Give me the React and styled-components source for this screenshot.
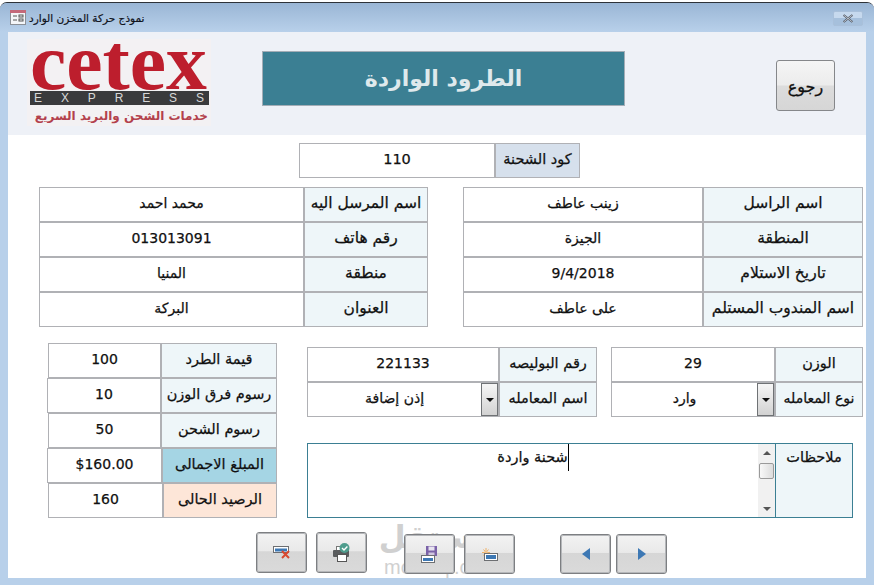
import React from 'react'
import styled, { createGlobalStyle } from 'styled-components'

const FONT = `"DejaVu Sans", "Noto Sans", sans-serif`

const GlobalStyle = createGlobalStyle`
  html, body {
    margin: 0;
    padding: 0;
    background: #fff;
    font-family: ${FONT};
  }
`

const labelTones = {
  pale: '#eef6f9',
  steel: '#d6e0ec',
  blue: '#a5d5e4',
  peach: '#fde6d8',
}

const senderRows = [
  ['اسم الراسل', 'زينب عاطف'],
  ['المنطقة', 'الجيزة'],
  ['تاريخ الاستلام', '9/4/2018'],
  ['اسم المندوب المستلم', 'على عاطف'],
]

const receiverRows = [
  ['اسم المرسل اليه', 'محمد احمد'],
  ['رقم هاتف', '013013091'],
  ['منطقة', 'المنيا'],
  ['العنوان', 'البركة'],
]

const feeRows = [
  { label: 'قيمة الطرد', value: '100', columns: '113px 116px', inset: 1 },
  { label: 'رسوم فرق الوزن', value: '10', columns: '114px 116px', inset: 0 },
  { label: 'رسوم الشحن', value: '50', columns: '113px 116px', inset: 1 },
  { label: 'المبلغ الاجمالى', value: '$160.00', columns: '115px 115px', inset: 0, tone: 'blue' },
  { label: 'الرصيد الحالى', value: '160', columns: '115px 114px', inset: 1, tone: 'peach' },
]

const Window = styled.div`
  width: 874px;
  height: 583px;
  box-sizing: border-box;
  margin-top: 2px;
  border-top: 1px solid #2d3238;
  border-radius: 7px 7px 0 0;
  background: #b8d0ea;
  display: flex;
  flex-direction: column;
  overflow: hidden;
`

const TitleBar = styled.div`
  height: 29px;
  flex: none;
  display: flex;
  align-items: center;
  padding: 0 11px 0 10px;
  background: linear-gradient(#9ab6d5, #b8d0ea);
`

const TitleText = styled.span`
  margin-left: 3px;
  font-size: 10.5px;
  color: #10131c;
  white-space: nowrap;
  -webkit-text-stroke: 0.2px #10131c;
`

const CloseButton = styled.div`
  margin-left: auto;
  margin-top: 1px;
  width: 30px;
  height: 15px;
  box-sizing: border-box;
  border: 1px solid #a9c0da;
  border-radius: 2px;
  background: linear-gradient(#c6d9ee 50%, #a6c0dc 50%);
  display: flex;
  align-items: center;
  justify-content: center;
`

const Content = styled.div`
  position: relative;
  width: 858px;
  height: 546px;
  margin-left: 8px;
  background: #fff;
  overflow: hidden;
`

const Header = styled.div`
  height: 103px;
  display: flex;
  align-items: flex-start;
  background: #eef1f7;
`

const LogoSlot = styled.div`
  width: 184px;
  height: 87px;
  margin: 7px 0 0 19px;
  flex: none;
`

const Banner = styled.div`
  width: 363px;
  height: 55px;
  margin: 19px 0 0 51px;
  flex: none;
  box-sizing: border-box;
  border: 1px solid #a3adb6;
  background: #3b7f93;
  color: #dfe9ec;
  font-size: 22px;
  font-weight: 700;
  display: flex;
  align-items: center;
  justify-content: center;
`

const BackButton = styled.div`
  width: 59px;
  height: 51px;
  margin: 28px 0 0 151px;
  flex: none;
  box-sizing: border-box;
  border: 1px solid #85878a;
  border-radius: 3px;
  background: linear-gradient(#f5f5f5, #ececec 48%, #dcdcdc 52%, #d6d6d6);
  font-size: 16px;
  color: #101010;
  -webkit-text-stroke: 0.3px #101010;
  display: flex;
  align-items: center;
  justify-content: center;
  padding-top: 2px;
`

const Row = styled.div`
  display: grid;
  grid-template-columns: ${(p) => p.$columns};
  height: 35px;
  margin-left: ${(p) => p.$inset || 0}px;
`

const Cell = styled.div`
  box-sizing: border-box;
  border: 1px solid #b0b1b5;
  display: flex;
  align-items: center;
  justify-content: center;
  padding-bottom: 4px;
  font-size: ${(p) => p.$size || 14}px;
  color: #101010;
  -webkit-text-stroke: 0.25px #101010;
  white-space: nowrap;
  overflow: hidden;
`

const Value = styled(Cell)`
  background: #fff;
  position: relative;
  padding-right: ${(p) => (p.$drop ? 17 : 0)}px;
`

const Label = styled(Cell)`
  background: ${(p) => labelTones[p.$tone || 'pale']};
`

const CodeRow = styled.div`
  margin: 8px 0 0 291px;
  width: 281px;
`

const PartyRow = styled.div`
  display: grid;
  grid-template-columns: 389px 400px;
  column-gap: 35px;
  margin: 9px 0 0 31px;
`

const Lower = styled.div`
  display: grid;
  grid-template-columns: 230px 556px;
  column-gap: 30px;
  margin: 16px 0 0 39px;
`

const FieldColumns = styled.div`
  display: grid;
  grid-template-columns: 290px 252px;
  column-gap: 14px;
  margin-top: 4px;
`

const Notes = styled.div`
  display: grid;
  grid-template-columns: 468px 78px;
  height: 75px;
  margin-top: 26px;
`

const NotesField = styled.div`
  box-sizing: border-box;
  border: 1px solid #3b7f93;
  border-right: none;
  display: grid;
  grid-template-columns: 1fr 17px;
  background: #fff;
`

const NotesText = styled.div`
  display: flex;
  justify-content: center;
  align-items: flex-start;
  font-size: 14.5px;
  color: #101010;
  -webkit-text-stroke: 0.25px #101010;
`

const Caret = styled.span`
  display: inline-block;
  height: 27px;
  line-height: 27px;
  border-right: 1px solid #000;
  white-space: nowrap;
`

const NotesLabel = styled.div`
  box-sizing: border-box;
  border: 1px solid #3b7f93;
  background: #eef6f9;
  font-size: 14.5px;
  color: #101010;
  -webkit-text-stroke: 0.25px #101010;
  text-align: center;
  padding-top: 5px;
`

const Scrollbar = styled.div`
  background: #f1f1f1;
  display: flex;
  flex-direction: column;
  align-items: center;
  padding: 7px 0 6px;
`

const ScrollThumb = styled.div`
  width: 15px;
  height: 16px;
  margin-top: 8px;
  box-sizing: border-box;
  border: 1px solid #9a9a9a;
  border-radius: 2px;
  background: linear-gradient(90deg, #f8f8f8, #dcdcdc);
`

const Triangle = styled.span`
  width: 0;
  height: 0;
  border-left: 4px solid transparent;
  border-right: 4px solid transparent;
  border-${(p) => (p.$up ? 'bottom' : 'top')}: 4px solid ${(p) => p.$color || '#555'};
  margin-top: ${(p) => p.$push || 0};
`

const DropButton = styled.div`
  position: absolute;
  right: 0;
  top: 0;
  bottom: 0;
  width: 17px;
  box-sizing: border-box;
  border: 1px solid #6f7275;
  background: linear-gradient(#f6f6f6, #d2d2d2);
  display: flex;
  align-items: center;
  justify-content: center;
`

const Footer = styled.div`
  display: flex;
  align-items: flex-start;
  margin: 14px 0 0 248px;
`

const ActionButton = styled.div`
  position: relative;
  z-index: 1;
  width: 51px;
  height: ${(p) => (p.$low ? 40 : 41)}px;
  margin-left: ${(p) => p.$gap}px;
  margin-top: ${(p) => (p.$low ? 2 : 0)}px;
  flex: none;
  box-sizing: border-box;
  border: 1px solid #7d7f82;
  outline: 1px solid #b5b7ba;
  outline-offset: -2px;
  border-radius: 3px;
  background: linear-gradient(#f3f3f3, #e9e9e9 46%, #d6d6d6 48%, #dadada);
  display: flex;
  align-items: center;
  justify-content: center;
`

const Watermark = styled.div`
  position: absolute;
  left: 376px;
  top: 484px;
  width: 108px;
  text-align: center;
  color: #d0d0d0;
  pointer-events: none;
`

const WatermarkWord = styled.div`
  font-size: 31px;
  font-weight: 700;
  line-height: 42px;
`

const WatermarkDomain = styled.div`
  font-size: 20px;
  line-height: 18px;
  font-family: "Liberation Sans", sans-serif;
`

const LogoMark = () => (
  <svg width="184" height="87" viewBox="0 0 184 87">
    <rect width="184" height="87" fill="#f3f1f3" />
    <text
      x="3"
      y="50"
      fontFamily="Liberation Serif, serif"
      fontWeight="700"
      fontSize="80"
      fill="#bd1e2d"
      textLength="177"
      lengthAdjust="spacingAndGlyphs"
    >
      cetex
    </text>
    <rect x="3" y="52" width="179" height="14" fill="#3a3a3c" />
    <text
      x="7"
      y="63"
      fontFamily="Liberation Sans, sans-serif"
      fontSize="12"
      fill="#d8d8d8"
      textLength="170"
    >
      EXPRESS
    </text>
    <text
      x="181"
      y="81"
      direction="rtl"
      fontFamily="DejaVu Sans, sans-serif"
      fontWeight="700"
      fontSize="12"
      fill="#b3414c"
    >
      خدمات الشحن والبريد السريع
    </text>
  </svg>
)

const DeleteIcon = () => (
  <svg width="18" height="13" viewBox="0 0 18 13">
    <rect x="0.5" y="0.5" width="15" height="6" fill="#fff" stroke="#6d6f72" />
    <rect x="2" y="2.500" width="12" height="3" fill="#3d78b4" />
    <path d="M9 5l7 7M16 5l-7 7" stroke="#d9482f" strokeWidth="2" fill="none" />
  </svg>
)

const PrintIcon = () => (
  <svg width="17" height="20" viewBox="0 0 17 20">
    <rect x="3.500" y="3.500" width="6" height="6" fill="#fff" stroke="#777" />
    <rect x="0" y="7" width="16" height="7" rx="1" fill="#5a5c5e" />
    <rect x="4.500" y="11.500" width="9" height="7" fill="#fff" stroke="#555" />
    <circle cx="11.500" cy="5" r="5" fill="#4f9d8d" />
    <path d="M9 5l2 2 3.400-3.600" stroke="#fff" strokeWidth="1.400" fill="none" />
  </svg>
)

const SaveIcon = () => (
  <svg width="17" height="17" viewBox="0 0 17 17">
    <rect x="5" y="0" width="11" height="10" fill="#7b62a8" />
    <rect x="7.500" y="0.500" width="6" height="4" fill="#e8e4f0" />
    <rect x="7.500" y="6.500" width="6" height="3.500" fill="#cfc6de" />
    <rect x="0.5" y="9.500" width="13" height="7" fill="#fff" stroke="#6d6f72" />
    <rect x="2" y="12" width="10" height="3" fill="#3d78b4" />
  </svg>
)

const NewIcon = () => (
  <svg width="16" height="13" viewBox="0 0 16 13">
    <path d="M4 0v9M0 4.500h8M1.500 1.500l5 6M6.500 1.500l-5 6" stroke="#eeb26a" strokeWidth="1" fill="none" />
    <circle cx="4" cy="4.500" r="1.600" fill="#f3c58c" />
    <rect x="2.500" y="5.500" width="13" height="7" fill="#fff" stroke="#6d6f72" />
    <rect x="4" y="7" width="10" height="4" fill="#3d78b4" />
  </svg>
)

const ArrowIcon = ({ left }) => (
  <svg width="8" height="12" viewBox="0 0 8 12">
    <path d={left ? 'M8 0v12L0 6z' : 'M0 0v12l8-6z'} fill="#3d78b4" />
  </svg>
)

const TableIcon = () => (
  <svg width="16" height="15" viewBox="0 0 16 15">
    <rect x="0.5" y="0.5" width="15" height="14" fill="#f4f6f9" stroke="#8b8f96" />
    <rect x="0" y="0" width="16" height="3" fill="#c4697a" />
    <path d="M3 6h4M3 10h4" stroke="#555" />
    <rect x="9" y="5" width="4" height="2" fill="none" stroke="#555" />
    <rect x="9" y="9" width="4" height="2" fill="none" stroke="#555" />
  </svg>
)

const CloseIcon = () => (
  <svg width="12" height="9" viewBox="0 0 12 9">
    <path d="M1.500 1l9 7M10.500 1l-9 7" stroke="#4d5560" strokeWidth="2" fill="none" />
    <path d="M1.500 1l9 7M10.500 1l-9 7" stroke="#e8eef5" strokeWidth="0.7" fill="none" />
  </svg>
)

const DetailTable = ({ rows, columns }) => (
  <div>
    {rows.map(([label, value]) => (
      <Row key={label} $columns={columns}>
        <Value dir="rtl">{value}</Value>
        <Label dir="rtl" $size={15.5}>{label}</Label>
      </Row>
    ))}
  </div>
)

const App = () => {
  return (
    <>
      <GlobalStyle />
      <Window>
        <TitleBar>
          <TableIcon />
          <TitleText dir="rtl">نموذج حركة المخزن الوارد</TitleText>
          <CloseButton>
            <CloseIcon />
          </CloseButton>
        </TitleBar>
        <Content>
          <Header>
            <LogoSlot>
              <LogoMark />
            </LogoSlot>
            <Banner dir="rtl">الطرود الواردة</Banner>
            <BackButton dir="rtl">رجوع</BackButton>
          </Header>

          <CodeRow>
            <Row $columns="196px 85px">
              <Value $size={14.5}>110</Value>
              <Label dir="rtl" $tone="steel" $size={14.5}>كود الشحنة</Label>
            </Row>
          </CodeRow>

          <PartyRow>
            <DetailTable rows={receiverRows} columns="265px 124px" />
            <DetailTable rows={senderRows} columns="240px 160px" />
          </PartyRow>

          <Lower>
            <div>
              {feeRows.map((row) => (
                <Row key={row.label} $columns={row.columns} $inset={row.inset}>
                  <Value>{row.value}</Value>
                  <Label dir="rtl" $tone={row.tone} $size={14.5}>{row.label}</Label>
                </Row>
              ))}
            </div>
            <div>
              <FieldColumns>
                <div>
                  <Row $columns="192px 98px">
                    <Value>221133</Value>
                    <Label dir="rtl" $size={14.5}>رقم البوليصه</Label>
                  </Row>
                  <Row $columns="192px 98px">
                    <Value $drop>
                      <span dir="rtl">إذن إضافة</span>
                      <DropButton><Triangle $color="#111" /></DropButton>
                    </Value>
                    <Label dir="rtl" $size={14.5}>اسم المعامله</Label>
                  </Row>
                </div>
                <div>
                  <Row $columns="164px 88px">
                    <Value>29</Value>
                    <Label dir="rtl" $size={14.5}>الوزن</Label>
                  </Row>
                  <Row $columns="164px 88px">
                    <Value $drop>
                      <span dir="rtl">وارد</span>
                      <DropButton><Triangle $color="#111" /></DropButton>
                    </Value>
                    <Label dir="rtl" $size={14}>نوع المعامله</Label>
                  </Row>
                </div>
              </FieldColumns>
              <Notes>
                <NotesField>
                  <NotesText dir="rtl">
                    <Caret>شحنة واردة</Caret>
                  </NotesText>
                  <Scrollbar>
                    <Triangle $up />
                    <ScrollThumb />
                    <Triangle $push="auto" />
                  </Scrollbar>
                </NotesField>
                <NotesLabel dir="rtl">ملاحظات</NotesLabel>
              </Notes>
            </div>
          </Lower>

          <Footer>
            <ActionButton $gap={0}><DeleteIcon /></ActionButton>
            <ActionButton $gap={9}><PrintIcon /></ActionButton>
            <ActionButton $gap={37} $low><SaveIcon /></ActionButton>
            <ActionButton $gap={9} $low><NewIcon /></ActionButton>
            <ActionButton $gap={45} $low><ArrowIcon left /></ActionButton>
            <ActionButton $gap={5} $low><ArrowIcon /></ActionButton>
          </Footer>

          <Watermark>
            <WatermarkWord dir="rtl">مستقل</WatermarkWord>
            <WatermarkDomain>mostaql.com</WatermarkDomain>
          </Watermark>
        </Content>
      </Window>
    </>
  )
}

export default App
